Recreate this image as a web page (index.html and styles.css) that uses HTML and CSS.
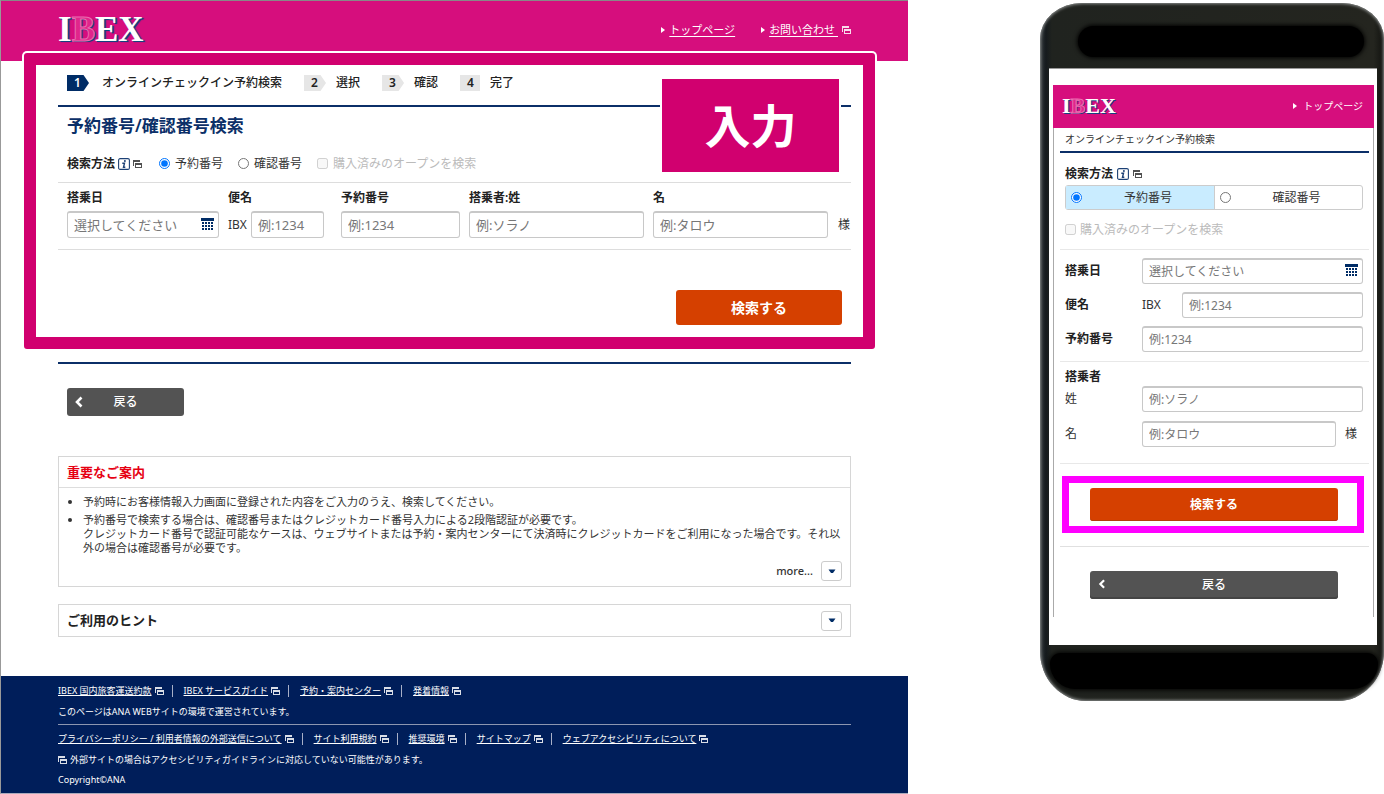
FILE: index.html
```html
<!DOCTYPE html>
<html lang="ja">
<head>
<meta charset="utf-8">
<title>オンラインチェックイン予約検索</title>
<link rel="stylesheet" href="styles.css">
</head>
<body>
<svg class="sprite" aria-hidden="true">
  <symbol id="window" viewBox="0 0 9 8">
    <path fill="currentColor" fill-rule="evenodd" d="M0 0h7v2H1v4H0zM2 3h7v5H2zM3 5v2h5V5z"/>
  </symbol>
  <symbol id="calendar" viewBox="0 0 13 13">
    <path fill="#002c66" d="M0 0h13v3H0zM1 4h2v2H1zM4 4h2v2H4zM7 4h2v2H7zM10 4h2v2h-2zM1 7h2v2H1zM4 7h2v2H4zM7 7h2v2H7zM10 7h2v2h-2zM1 10h2v2H1zM4 10h2v2H4zM7 10h2v2H7zM10 10h2v2h-2z"/>
  </symbol>
  <symbol id="info" viewBox="0 0 12 12">
    <rect x=".6" y=".6" width="10.8" height="10.8" rx="1.5" fill="#fff" stroke="#1c4176" stroke-width="1.1"/>
    <circle cx="6.9" cy="2.900" r="1" fill="#1c4176"/>
    <path d="M4.300 5.200h2.200L5.500 9.300h1.800" fill="none" stroke="#1c4176" stroke-width="1.400"/>
  </symbol>
  <symbol id="back" viewBox="0 0 8 12">
    <path d="M6.500 1.500L2 6l4.500 4.500" fill="none" stroke="#fff" stroke-width="2.600"/>
  </symbol>
  <symbol id="down" viewBox="0 0 8 5">
    <path d="M0.500 .5h7L5 4H3z" fill="#002c66"/>
  </symbol>
</svg>

<main class="desktop">
  <header class="site-header">
    <a class="logo" href="#">I<span class="logo-b">B</span>EX</a>
    <nav class="top-links">
      <span class="top-link"><a href="#">トップページ</a></span>
      <span class="top-link"><a href="#">お問い合わせ&nbsp;</a><svg class="win"><use href="#window"/></svg></span>
    </nav>
  </header>

  <form class="frame">
    <ol class="steps">
      <li><span class="step-no current">1</span>オンラインチェックイン予約検索</li>
      <li><span class="step-no">2</span>選択</li>
      <li><span class="step-no">3</span>確認</li>
      <li><span class="step-no last">4</span>完了</li>
    </ol>
    <h1>予約番号/確認番号検索</h1>
    <div class="method">
      <b>検索方法</b>
      <svg class="info"><use href="#info"/></svg>
      <svg class="win dark"><use href="#window"/></svg>
      <label class="first"><input type="radio" name="method" checked>予約番号</label>
      <label><input type="radio" name="method">確認番号</label>
      <label class="off"><input type="checkbox" disabled>購入済みのオープンを検索</label>
    </div>
    <div class="fields">
      <div class="field">
        <label for="date">搭乗日</label>
        <div class="with-icon"><input id="date" type="text" placeholder="選択してください"><svg class="cal"><use href="#calendar"/></svg></div>
      </div>
      <div class="field flight">
        <label for="flight">便名</label>
        <div class="row"><span>IBX</span><input id="flight" type="text" placeholder="例:1234"></div>
      </div>
      <div class="field">
        <label for="resv">予約番号</label>
        <input id="resv" type="text" placeholder="例:1234">
      </div>
      <div class="field">
        <label for="last">搭乗者:姓</label>
        <input id="last" type="text" placeholder="例:ソラノ">
      </div>
      <div class="field">
        <label for="first">名</label>
        <div class="row name"><input id="first" type="text" placeholder="例:タロウ"><span>様</span></div>
      </div>
    </div>
    <div class="actions"><button type="button" class="search">検索する</button></div>
    <div class="callout">入力</div>
  </form>

  <div class="body">
    <div class="back-row"><button type="button" class="back"><svg class="chev"><use href="#back"/></svg><span>戻る</span></button></div>

    <section class="panel">
      <h2 class="notice">重要なご案内</h2>
      <ul>
        <li>予約時にお客様情報入力画面に登録された内容をご入力のうえ、検索してください。</li>
        <li>予約番号で検索する場合は、確認番号またはクレジットカード番号入力による2段階認証が必要です。<br>クレジットカード番号で認証可能なケースは、ウェブサイトまたは予約・案内センターにて決済時にクレジットカードをご利用になった場合です。それ以外の場合は確認番号が必要です。</li>
      </ul>
      <div class="more"><span>more...</span><button type="button" class="toggle" aria-label="more"><svg class="down"><use href="#down"/></svg></button></div>
    </section>

    <section class="panel hint">
      <h2>ご利用のヒント</h2>
      <button type="button" class="toggle" aria-label="ご利用のヒント"><svg class="down"><use href="#down"/></svg></button>
    </section>
  </div>

  <footer>
    <ul class="links">
      <li><a href="#">IBEX 国内旅客運送約款</a><svg class="win"><use href="#window"/></svg></li>
      <li><a href="#">IBEX サービスガイド</a><svg class="win"><use href="#window"/></svg></li>
      <li><a href="#">予約・案内センター</a><svg class="win"><use href="#window"/></svg></li>
      <li><a href="#">発着情報</a><svg class="win"><use href="#window"/></svg></li>
    </ul>
    <p>このページはANA WEBサイトの環境で運営されています。</p>
    <hr>
    <ul class="links">
      <li><a href="#">プライバシーポリシー / 利用者情報の外部送信について</a><svg class="win"><use href="#window"/></svg></li>
      <li><a href="#">サイト利用規約</a><svg class="win"><use href="#window"/></svg></li>
      <li><a href="#">推奨環境</a><svg class="win"><use href="#window"/></svg></li>
      <li><a href="#">サイトマップ</a><svg class="win"><use href="#window"/></svg></li>
      <li><a href="#">ウェブアクセシビリティについて</a><svg class="win"><use href="#window"/></svg></li>
    </ul>
    <p class="external"><svg class="win"><use href="#window"/></svg>外部サイトの場合はアクセシビリティガイドラインに対応していない可能性があります。</p>
    <p class="copyright">Copyright©ANA</p>
  </footer>
</main>

<aside class="phone">
  <div class="screen">
    <form class="mobile">
      <header class="m-header">
        <a class="logo small" href="#">I<span class="logo-b">B</span>EX</a>
        <span class="top-link"><a href="#">トップページ</a></span>
      </header>
      <div class="m-title">オンラインチェックイン予約検索</div>
      <div class="m-group">
        <div class="m-method"><b>検索方法</b><svg class="info"><use href="#info"/></svg><svg class="win dark"><use href="#window"/></svg></div>
        <div class="segments">
          <label class="on"><input type="radio" name="m-method" checked><span>予約番号</span></label>
          <label><input type="radio" name="m-method"><span>確認番号</span></label>
        </div>
        <label class="off m-open"><input type="checkbox" disabled>購入済みのオープンを検索</label>
      </div>
      <div class="m-group m-flight">
        <div class="m-row"><label for="m-date">搭乗日</label><div class="with-icon"><input id="m-date" type="text" placeholder="選択してください"><svg class="cal"><use href="#calendar"/></svg></div></div>
        <div class="m-row"><label for="m-flight">便名</label><span class="m-code">IBX</span><input id="m-flight" type="text" placeholder="例:1234"></div>
        <div class="m-row"><label for="m-resv">予約番号</label><input id="m-resv" type="text" placeholder="例:1234"></div>
      </div>
      <div class="m-group m-person">
        <b>搭乗者</b>
        <div class="m-row plain"><label for="m-last">姓</label><input id="m-last" type="text" placeholder="例:ソラノ"></div>
        <div class="m-row plain"><label for="m-first">名</label><input id="m-first" type="text" placeholder="例:タロウ"><span class="m-sama">様</span></div>
      </div>
      <div class="m-search"><div class="mark"><button type="button" class="search">検索する</button></div></div>
      <div class="m-back"><button type="button" class="back"><svg class="chev"><use href="#back"/></svg><span>戻る</span></button></div>
    </form>
  </div>
</aside>
</body>
</html>
```
FILE: styles.css
```css
* { box-sizing: border-box; }
body {
  margin: 0;
  display: flex;
  align-items: flex-start;
  gap: 132px;
  background: #fff;
  color: #333;
  font-family: "Noto Sans", "Noto Sans CJK JP", sans-serif;
  font-size: 12px;
  line-height: 18px;
}
ul, ol, p, h1, h2 { margin: 0; padding: 0; list-style: none; }
b, h1, h2 { color: #222; font-weight: 600; }
input, button { font: inherit; margin: 0; }
a { color: inherit; }
svg { flex: none; display: block; }
.sprite { position: absolute; width: 0; height: 0; }
.win { width: 9px; height: 8px; opacity: .85; }
.dark { color: #333; }
.info { width: 12px; height: 12px; }
.cal { width: 13px; height: 13px; }
.chev { width: 8px; height: 12px; }
.down { width: 8px; height: 5px; }

/* Desktop page */
.desktop { flex: 1; min-width: 0; border-top: 1px solid #888; border-left: 1px solid #999; border-bottom: 1px solid #aab; }
.site-header {
  display: flex;
  justify-content: space-between;
  align-items: center;
  height: 60px;
  padding: 0 57px 2px;
  background: #d60e7d;
  color: #fff;
}
.logo {
  font: bold 35px/36px "Liberation Serif", serif;
  color: #fff;
  text-decoration: none;
  text-shadow: 1px 1px 0 #14417f, 2px 1px 1px #14417f;
}
.logo-b { color: #e0268b; -webkit-text-stroke: 1px #ea6db0; }
.logo.small { font-size: 22px; line-height: 24px; text-shadow: 1px 1px 0 #14417f; }
.top-links { display: flex; gap: 26px; font-size: 11px; }
.top-link { display: flex; align-items: center; gap: 4px; }
.top-link::before { content: ""; border-left: 4px solid #fff; border-top: 3px solid transparent; border-bottom: 3px solid transparent; }
.top-link a { text-underline-offset: 2px; }

.frame {
  position: relative;
  margin: -8px 33px 0 23px;
  padding: 10px 12px 12px 22px;
  border: 12px solid #d1006f;
  border-radius: 3px;
  box-shadow: 0 0 0 2px #fff;
  background: #fff;
}
.steps { display: flex; gap: 22px; padding: 0 9px 14px; color: #222; font-weight: 500; line-height: 16px; }
.steps li { display: flex; gap: 10px; }
.steps li:first-child { gap: 13px; }
.step-no {
  width: 22px;
  padding-left: 7px;
  background: #e6e6e6;
  clip-path: polygon(0 0, 75% 0, 100% 50%, 75% 100%, 0 100%);
  font-weight: 600;
}
.step-no.current { background: #002c66; color: #fff; }
.step-no.last { width: 20px; clip-path: none; }
h1 { padding-left: 9px; border-top: 2px solid #0b2f68; color: #0b2f68; font-size: 17px; line-height: 38px; }
.method { display: flex; align-items: center; gap: 3px; height: 38px; padding-left: 9px; border-bottom: 1px solid #ddd; }
.method label { display: flex; align-items: center; gap: 5px; margin-right: 12px; }
.method .first { margin-left: 14px; }
input[type="radio"], input[type="checkbox"] { width: 11px; height: 11px; flex: none; }
.off { color: #bbb; }
.fields {
  display: grid;
  grid-template-columns: 152fr 104fr 119fr 175fr 197fr;
  gap: 9px;
  padding: 6px 1px 11px 9px;
  border-bottom: 1px solid #ddd;
}
.field { display: flex; flex-direction: column; gap: 4px; min-width: 0; }
.field label { color: #222; font-weight: 600; }
.flight { padding-right: 8px; }
.row { display: flex; align-items: center; gap: 4px; }
.name { gap: 10px; }
input[type="text"] {
  flex: 1;
  width: 100%;
  min-width: 0;
  height: 27px;
  padding: 0 6px 1px;
  border: 1px solid #c8c8c8;
  border-width: 2px 1px 1px;
  border-radius: 3px;
  background: #fff;
  font-size: 13px;
}
.field > input[type="text"] { flex: none; }
::placeholder { color: #777; opacity: 1; }
.with-icon { display: flex; flex: 1; position: relative; }
.with-icon .cal { position: absolute; right: 5px; top: 7px; }
.actions { display: flex; justify-content: flex-end; padding: 40px 9px 0 0; }
.search { border: 0; border-radius: 3px; background: #d54000; color: #fff; font-weight: 700; }
.actions .search { width: 166px; height: 35px; font-size: 14px; }
.callout {
  position: absolute;
  right: 24px;
  top: 14px;
  width: 177px;
  box-shadow: 0 0 0 2px #fff;
  background: #d1006f;
  color: #fff;
  font-size: 46px;
  font-weight: 700;
  line-height: 93px;
  text-align: center;
}

.body { margin: 13px 57px 39px; border-top: 2px solid #0b2f68; }
.back-row { padding: 24px 9px 40px; }
.back { position: relative; width: 117px; height: 28px; border: 0; border-radius: 3px; background: #535353; color: #fff; font-weight: 500; }
.back .chev { position: absolute; left: 8px; top: 8px; }
.panel { border: 1px solid #d6d6d6; }
.panel + .panel { margin-top: 17px; }
h2 { padding-left: 8px; font-size: 13px; line-height: 30px; }
.notice { border-bottom: 1px solid #ddd; color: #e60012; }
.panel ul { padding: 7px 8px 0 24px; font-size: 11px; line-height: 14px; }
.panel li { list-style: disc; margin-bottom: 4px; }
.more { display: flex; justify-content: flex-end; align-items: center; gap: 8px; padding: 2px 8px 5px; font-size: 11px; font-weight: 500; }
.toggle { display: flex; align-items: center; justify-content: center; width: 21px; height: 20px; padding: 0; border: 1px solid #ccc; border-radius: 3px; background: #fff; }
.hint { display: flex; justify-content: space-between; align-items: center; padding-right: 8px; }
.hint h2 { line-height: 31px; }

footer { padding: 4px 57px; background: #001e5a; color: #fff; font-size: 9px; line-height: 21px; }
.links { display: flex; }
.links li { display: flex; align-items: center; gap: 3px; white-space: nowrap; }
.links li + li::before { content: ""; width: 1px; height: 12px; margin: 0 8px; background: #a8b0c8; }
.links a { text-underline-offset: 1px; }
hr { margin: 2px 0 3px; border: 0; border-top: 1px solid #8c96b0; }
.external { display: flex; align-items: center; gap: 3px; }
.copyright { line-height: 19px; }

/* Phone */
.phone {
  position: relative;
  flex: none;
  width: 344px;
  margin-top: 3px;
  padding: 65px 7px 56px 9px;
  border-radius: 42px 42px 46px 46px / 36px 36px 50px 50px;
  background: linear-gradient(90deg, #30363a, #151a1d 6px, #20231f 12px, #24251f 97%, #11120f);
  box-shadow: inset 0 0 3px 1px #8a8d8c;
}
.phone::before, .phone::after { content: ""; position: absolute; background: #000; }
.phone::before { left: 38px; right: 20px; top: 23px; height: 31px; border-radius: 16px; box-shadow: 0 0 4px 1px #000; }
.phone::after { left: 10px; right: 6px; bottom: 12px; height: 36px; border-radius: 16px 16px 38px 38px; box-shadow: 0 0 5px 1px #000; }
.screen { padding: 16px 3px 28px 4px; border-top: 1px solid #999; background: #fff; }
.mobile { padding-bottom: 18px; border: solid #aaa; border-width: 0 1px; background: #fff; }
.m-header { display: flex; align-items: center; justify-content: space-between; height: 43px; margin: 0 -1px; padding: 0 11px 2px 9px; background: #d60e7d; color: #fff; font-size: 10px; }
.m-header .top-link { gap: 6px; }
.m-header .top-link a { text-decoration: none; }
.m-title { margin: 0 4px 0 6px; padding: 2px 6px 3px 5px; border-bottom: 2px solid #0b2f68; font-size: 10px; }
.m-group { margin: 0 4px 0 6px; padding: 0 6px 0 5px; border-bottom: 1px solid #e8e8e8; }
.m-method { display: flex; align-items: center; gap: 4px; padding-top: 12px; }
.segments { display: grid; grid-template-columns: 1fr 1fr; margin-top: 2px; border: 1px solid #ccc; border-radius: 3px; }
.segments label { display: flex; align-items: center; height: 23px; padding-left: 5px; }
.segments label + label { border-left: 1px solid #ccc; }
.segments span { flex: 1; text-align: center; }
.segments .on { background: #c9ecff; }
.m-open { display: flex; align-items: center; gap: 4px; height: 39px; }
.m-flight { display: grid; gap: 8px; padding-top: 8px; padding-bottom: 9px; }
.m-row { display: flex; align-items: center; }
.m-row label { width: 77px; color: #222; font-weight: 600; }
.m-row.plain label { color: #333; font-weight: 400; }
.m-row input[type="text"] { height: 26px; font-size: 12px; }
.m-row .cal { top: 6px; }
.m-code { width: 40px; }
.m-sama { margin: 0 6px 0 9px; }
.m-person { display: grid; padding-top: 6px; padding-bottom: 16px; }
.m-person .m-row + .m-row { margin-top: 9px; }
.m-search { margin: 0 4px 0 6px; padding: 12px 5px 13px 2px; border-bottom: 1px solid #e0e0e0; }
.mark { border: 7px solid #f0f; padding: 5px 19px 5px 21px; }
.mark .search { display: block; width: 100%; height: 33px; box-shadow: inset 0 -1px #b33a08; }
.m-back { padding: 24px 35px 0 36px; }
.m-back .back { display: block; width: 100%; box-shadow: inset 0 -2px #444; }
.m-back .chev { height: 10px; }
```
